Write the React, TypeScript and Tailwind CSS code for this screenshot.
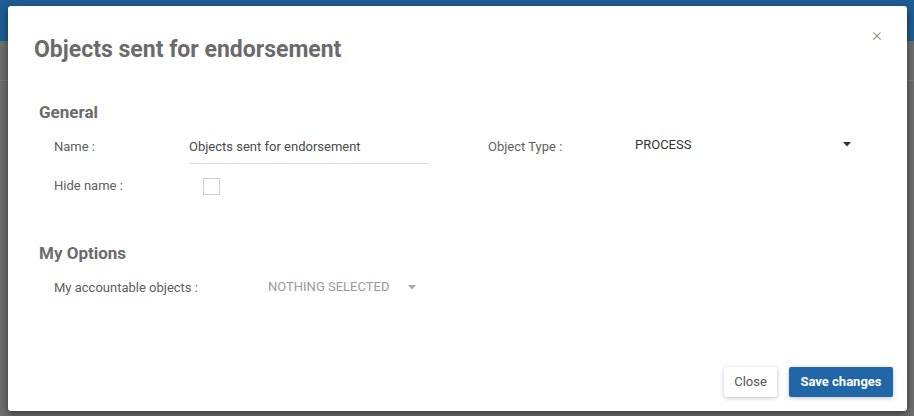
import React from "react";

function Caret({ color }: { color: string }) {
  return (
    <svg width="8" height="5" viewBox="0 0 8 5" className="block">
      <path d="M0 0 L8 0 L4 4.5 Z" fill={color} />
    </svg>
  );
}

export default function App() {
  return (
    <div
      className="relative w-[914px] h-[416px] overflow-hidden bg-[#6f6f6f]"
      style={{ fontFamily: "Roboto, 'Liberation Sans', sans-serif" }}
    >
      {/* background page (under overlay) */}
      <div className="h-[41px] bg-[#1d5d94]" />
      <div className="h-[40px] border-b border-[#7b7b7b]" />

      {/* modal */}
      <div className="absolute left-[8px] top-[6px] w-[899px] h-[405px] bg-white rounded-[3px] shadow-[0_3px_9px_rgba(0,0,0,0.5)] flex flex-col">
        <div className="flex items-start justify-between pt-[30px] pl-[26px] pr-[24px]">
          <h4 className="text-[23px] leading-[28px] font-bold text-[#6b6b6b] tracking-[0px]">
            Objects sent for endorsement
          </h4>
          <span className="text-[19px] leading-[18px] mt-[-10px] mr-[1px] text-[#8a8a8a] font-light">×</span>
        </div>

        <div className="pl-[31px] pt-[36px]">
          <div className="text-[17px] leading-[24px] font-bold text-[#6b6b6b]">General</div>

          <div className="flex items-center pl-[15px] mt-[6px]">
            <div className="w-[135px] text-[13px] text-[#5e5e5e]">Name :</div>
            <div className="w-[239px] h-[34px] border-b border-[#dddddd] flex items-center text-[13px] text-[#4a4a4a]">
              Objects sent for endorsement
            </div>
            <div className="w-[60px]" />
            <div className="w-[147px] text-[13px] text-[#5e5e5e] self-start pt-[7px]">Object Type :</div>
            <div className="w-[220px] flex items-center justify-between self-start pt-[5px] text-[13px] text-[#333]">
              <span>PROCESS</span>
              <span className="mr-[4px]"><Caret color="#333" /></span>
            </div>
          </div>

          <div className="flex items-center pl-[15px] mt-[12px] h-[20px]">
            <div className="w-[135px] text-[13px] text-[#5e5e5e]">Hide name :</div>
            <div className="ml-[14px] w-[17px] h-[17px] border border-[#cfcfcf] bg-white" />
          </div>

          <div className="text-[17px] leading-[24px] font-bold text-[#6b6b6b] mt-[45px]">My Options</div>

          <div className="flex items-center pl-[15px] mt-[13px] h-[20px]">
            <div className="w-[214px] text-[13px] text-[#5e5e5e]">My accountable objects :</div>
            <div className="flex items-center text-[13px] text-[#9a9a9a] -mt-[2px]">
              <span>NOTHING SELECTED</span>
              <span className="ml-[19px]"><Caret color="#a8a8a8" /></span>
            </div>
          </div>
        </div>

        <div className="flex-1" />
        <div className="flex justify-end gap-[12px] pr-[14px] pb-[14px]">
          <button className="h-[30px] w-[53px] bg-white text-[13px] text-[#555] rounded-[2px] shadow-[0_1px_4px_rgba(0,0,0,0.25)]">
            Close
          </button>
          <button className="h-[30px] w-[104px] bg-[#2166a6] text-[13px] font-bold text-white rounded-[2px] shadow-[0_1px_4px_rgba(0,0,0,0.25)]">
            Save changes
          </button>
        </div>
      </div>
    </div>
  );
}
